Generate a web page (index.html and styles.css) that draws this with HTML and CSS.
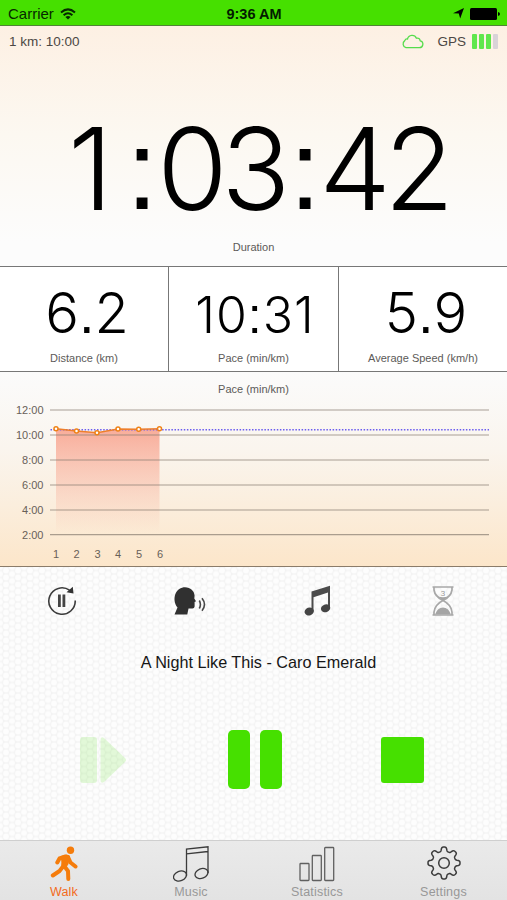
FILE: index.html
```html
<!DOCTYPE html>
<html lang="en">
<head>
<meta charset="utf-8">
<title>Walk</title>
<link rel="stylesheet" href="styles.css">
</head>
<body>
<div class="app">
  <header class="status">
    <div class="carrier"><span>Carrier</span>
      <svg width="16" height="12" viewBox="0 0 16 12" fill="none" stroke="#062800" stroke-width="2"><path d="M1 4.5Q8-1.8 15 4.5M3.6 7.2Q8 3.4 12.4 7.2"/><path d="M8 11.4L5.4 8.9Q8 6.9 10.6 8.9Z" fill="#062800" stroke="none"/></svg>
    </div>
    <div class="clock">9:36 AM</div>
    <div class="power">
      <svg width="11" height="11" viewBox="0 0 11 11"><path d="M11 0L7.2 10.5 5.8 5.6 0 5.2Z"/></svg>
      <svg width="30" height="12" viewBox="0 0 30 12"><rect width="27" height="12" rx="1.5"/><path d="M28 4q2 .4 2 2t-2 2z"/></svg>
    </div>
  </header>
  <section class="duration">
    <div class="info">
      <span>1 km: 10:00</span>
      <div class="signal">
        <svg width="23" height="15" viewBox="0 0 23 15" fill="none" stroke="#55dc4c" stroke-width="1.3"><path d="M5 13.7A4 4 0 0 1 3.8 6.6Q4.4 4.7 6.500 5A4.700 4.700 0 0 1 15.400 4.200Q18.600 3.400 19.200 6.800A3.500 3.500 0 0 1 18.300 13.700Z"/></svg>
        <span class="gps">GPS</span>
        <div class="bars"><i></i><i></i><i></i><i class="off"></i></div>
      </div>
    </div>
    <div class="time"><span class="one">1</span><span class="mark">:</span><span class="pair">03</span><span class="mark">:</span><span class="pair">42</span></div>
    <div class="label">Duration</div>
  </section>
  <section class="metrics">
    <div class="metric"><div class="value">6<span class="mark">.</span>2</div><div class="label">Distance (km)</div></div>
    <div class="metric"><div class="value small">10<span class="mark">:</span>31</div><div class="label">Pace (min/km)</div></div>
    <div class="metric"><div class="value">5<span class="mark">.</span>9</div><div class="label">Average Speed (km/h)</div></div>
  </section>
  <section class="chart">
    <div class="label">Pace (min/km)</div>
    <svg class="plot" width="507" height="166" viewBox="0 400 507 166">
      <defs><linearGradient id="fade" x1="0" y1="0" x2="0" y2="1"><stop offset="0" stop-color="#f89a84" stop-opacity=".8"/><stop offset="1" stop-color="#f8a890" stop-opacity="0"/></linearGradient></defs>
      <path d="M56 429L76.500 431 97 433 118 429H159.500V534H56Z" fill="url(#fade)"/>
      <path d="M50 410H489M50 435H489M50 460H489M50 485H489M50 510H489M50 534.700H489" stroke="#887c70" stroke-opacity=".7" stroke-width="1.200"/>
      <path d="M50.500 429.700H489" stroke="#6a5cf0" stroke-width="1.500" stroke-dasharray="1.500 1.600"/>
      <path d="M56 428.700L76.500 431 97 432.800 118 429 138.700 429.200 159.500 428.700" fill="none" stroke="#ee7f2c" stroke-width="1.500"/>
      <g fill="#fff" stroke="#ef8217" stroke-width="1.500"><circle cx="56" cy="428.700" r="2"/><circle cx="76.500" cy="431" r="2"/><circle cx="97" cy="432.800" r="2"/><circle cx="118" cy="429" r="2"/><circle cx="138.700" cy="429.200" r="2"/><circle cx="159.500" cy="428.700" r="2"/></g>
      <g class="axis" text-anchor="end"><text x="43.500" y="413.500">12:00</text><text x="43.500" y="438.500">10:00</text><text x="43.500" y="463.500">8:00</text><text x="43.500" y="488.500">6:00</text><text x="43.500" y="513.500">4:00</text><text x="43.500" y="538.500">2:00</text></g>
      <g class="axis" text-anchor="middle"><text x="56" y="558">1</text><text x="76.500" y="558">2</text><text x="97.500" y="558">3</text><text x="118" y="558">4</text><text x="139" y="558">5</text><text x="160" y="558">6</text></g>
    </svg>
  </section>
  <section class="player">
    <div class="tools">
      <svg width="30" height="30" viewBox="0 0 30 30"><path d="M22.500 4.200A13.200 13.200 0 1 0 28.200 14.500" fill="none" stroke="#3c3c3c" stroke-width="1.600"/><path d="M25.800 .8L26.500 7.400 19.500 6.300Z" fill="#333"/><path d="M11 8.500h2.800v12.500h-2.800zM15.500 8.500h2.800v12.500h-2.800z" fill="#444"/></svg>
      <svg width="32" height="28" viewBox="0 0 32 28"><path d="M.5 27.500L3.500 20.500C0 16.500 0 11 1.200 7.500 3 2.500 7 .2 11 .2 16.500.2 20.300 4 20.600 8.500L20.300 11.500 22 14.200 20.600 15V19.500Q20.300 21.800 18 21.500L14.500 21.500 13.300 27.500Z" fill="#303030"/><path d="M25.300 13.500Q27.500 17.500 25.300 21.500M28 11.300Q33 17.500 28 23.700" fill="none" stroke="#484848" stroke-width="1.600"/></svg>
      <svg width="27" height="31" viewBox="0 0 27 31"><path d="M7.500 6.500L26 .8V24H24V7.500L9.500 12.300V26.500H7.500Z" fill="#4b4b4b"/><ellipse cx="5.200" cy="26.500" rx="4.700" ry="3.900" transform="rotate(-20 5.200 26.500)" fill="#444"/><ellipse cx="21.600" cy="23.300" rx="4.700" ry="3.900" transform="rotate(-20 21.600 23.300)" fill="#444"/></svg>
      <svg width="22" height="30" viewBox="0 0 22 30"><path d="M.5 1H21.500M.5 29H21.500M2 1V4Q3 10.500 11 14.500 19 10.500 20 4V1M2 29V26Q3 18.500 11 14.500 19 18.500 20 26V29" fill="none" stroke="#a8a8a8" stroke-width="1.700"/><path d="M6 10.500Q11 11.800 16 10.500L11 14.500ZM3 28.500Q5.500 21.500 11 21.500 16.500 21.500 19 28.500Z" fill="#a5a5a5"/><text x="11" y="9.500" text-anchor="middle" class="count">3</text></svg>
    </div>
    <div class="song">A Night Like This - Caro Emerald</div>
    <div class="controls">
      <svg class="resume" width="46" height="46" viewBox="0 0 46 46"><rect width="17" height="46" rx="3"/><path d="M20.500 3Q20.500-1 24 1L45 21Q47 23 45 25L24 45Q20.500 47 20.500 43Z"/></svg>
      <div class="pause"><i></i><i></i></div>
      <div class="stop"></div>
    </div>
  </section>
  <nav class="tabs">
    <div class="tab active"><svg width="28" height="36" viewBox="0 0 28 36"><circle cx="20.500" cy="4.200" r="3.700" fill="#f57c0b"/><path d="M15.500 10.500L9.500 12.500 7.300 16.500M18 11L20.500 16.500 25.500 20.500M15.500 11.500L13 20.500 9.500 25 2.800 29.500M14.500 20.500L18 25 18.300 33" fill="none" stroke="#f57c0b" stroke-width="4" stroke-linecap="round" stroke-linejoin="round"/><path d="M11 10L17 8.500 20 10 18.500 18 16 22 11.500 20Z" fill="#f57c0b"/></svg><span>Walk</span></div>
    <div class="tab"><svg width="36" height="36" viewBox="0 0 36 36" fill="none" stroke="#3b3b3b" stroke-width="1.300"><path d="M13.500 30V3L35 .8V27M13.500 7.800L35 5.500"/><ellipse cx="7" cy="30" rx="6.700" ry="4.800" transform="rotate(-22 7 30)"/><ellipse cx="28.500" cy="27.500" rx="6.700" ry="4.800" transform="rotate(-22 28.500 27.500)"/></svg><span>Music</span></div>
    <div class="tab"><svg width="36" height="36" viewBox="0 0 36 36" fill="none" stroke="#606060" stroke-width="1.300"><rect x="1" y="17.500" width="9" height="17" rx=".7"/><rect x="13.300" y="9.500" width="9" height="25" rx=".7"/><rect x="25.700" y="1.500" width="9" height="33" rx=".7"/></svg><span>Statistics</span></div>
    <div class="tab"><svg width="34" height="34" viewBox="-17 -17 34 34" fill="none" stroke="#3b3b3b" stroke-width="1.500"><circle r="5.300"/><path id="gear"/></svg><span>Settings</span></div>
  </nav>
</div>
<script src="gear.js"></script>
</body>
</html>
```
FILE: gear.js
```js
const points = [];
for (let i = 0; i < 144; i++) {
  const a = i * Math.PI / 72;
  const wave = Math.tanh(2 * Math.cos(8 * a)) / Math.tanh(2);
  const r = 13.9 + 2.1 * wave;
  points.push((r * Math.sin(a)).toFixed(2) + ' ' + (-r * Math.cos(a)).toFixed(2));
}
document.getElementById('gear').setAttribute('d', 'M' + points.join('L') + 'Z');
```
FILE: styles.css
```css
* { box-sizing: border-box; }
body { margin: 0; font-family: "Liberation Sans", Arial, sans-serif; color: #000; }
.app { width: 507px; height: 900px; display: flex; flex-direction: column; overflow: hidden; }
svg { display: block; flex: none; }
.status { height: 26px; background: #46e000; border-bottom: 1px solid #508434; display: grid; grid-template-columns: 1fr 1fr 1fr; align-items: center; padding: 2px 7px 0 8px; font-size: 15px; color: #062800; }
.carrier, .power { display: flex; align-items: center; gap: 6px; }
.clock { text-align: center; font-weight: bold; font-size: 14.500px; color: #031c00; }
.power { justify-content: flex-end; }
.duration { height: 240px; background: linear-gradient(#fdf0e3, #fcf8f1 45%, #fcfcfc 90%); }
.info { height: 30px; padding: 0 9px; display: flex; justify-content: space-between; align-items: center; font-size: 13.500px; color: #4c4844; }
.signal { display: flex; align-items: center; }
.gps { margin: 0 6px 0 13px; font-size: 13.500px; }
.bars { display: flex; gap: 2px; }
.bars i { width: 5px; height: 15px; background: #5fe74c; border-radius: 1px; }
.bars .off { background: #d9d3d8; }
.time { height: 156px; display: flex; line-height: 226px; padding-left: 61px; font-family: Inter, sans-serif; font-weight: 300; font-size: 114px; white-space: nowrap; }
.time span { display: block; flex: none; text-align: center; }
.time .one { width: 64px; text-indent: -5px; }
.time .mark { width: 34px; line-height: 228px; }
.time .pair { width: 129px; letter-spacing: -6.500px; text-indent: -6px; }
.mark { font-family: "Liberation Sans", Arial, sans-serif; }
.label { font-size: 11px; line-height: 13px; text-align: center; color: #5c5a58; white-space: nowrap; }
.duration .label { margin-top: 29px; }
.metrics { height: 106px; display: grid; grid-template-columns: 168px 170px 1fr; border-top: 1px solid #777; border-bottom: 1px solid #777; background: #fff; }
.metric { text-align: center; }
.metric + .metric { border-left: 1px solid #777; }
.value { height: 85px; line-height: 92px; padding-left: 6px; font-family: Inter, sans-serif; font-weight: 300; font-size: 56px; }
.value.small { font-size: 50px; line-height: 97px; padding-left: 3px; letter-spacing: 1px; }
.chart { height: 195px; background: linear-gradient(#fbfbfb, #faf5ee 40%, #fce6ca); border-bottom: 1px solid #8b7c6a; padding-top: 11px; }
.plot { margin-top: 4px; }
.axis { font-size: 11px; fill: #686058; }
.player { height: 273px; padding-top: 18px; background-color: #f2f2f2; background-image: radial-gradient(circle, #fdfdfd 2.200px, transparent 3.800px), radial-gradient(circle, #fdfdfd 2.200px, transparent 3.800px); background-size: 12px 7px; background-position: 0 0, 6px 3.500px; }
.tools { height: 31px; display: grid; grid-template-columns: 124px 131px 124px 127px; justify-items: center; align-items: center; }
.count { font-size: 8px; fill: #999; }
.song { margin-top: 36px; text-align: center; font-size: 16.200px; line-height: 20px; color: #161616; padding-left: 10px; }
.controls { margin-top: 58px; display: flex; align-items: center; padding-left: 79.500px; }
.resume { fill: #46e000; opacity: .14; }
.pause { margin-left: 102px; display: flex; gap: 10px; }
.pause i { width: 22px; height: 59px; background: #46e000; border-radius: 5px; }
.stop { margin-left: 99px; width: 43px; height: 46px; background: #46e000; border-radius: 3px; }
.tabs { height: 60px; border-top: 1px solid #cfcfcf; background: linear-gradient(#eaeaea, #e3e3e3); display: grid; grid-template-columns: 128px 126px 126px 127px; }
.tab { display: flex; flex-direction: column; align-items: center; justify-content: space-between; padding: 5px 0 1px; color: #989898; font-size: 12.500px; line-height: 14px; letter-spacing: .2px; }
.active { color: #f36b1c; }
```
